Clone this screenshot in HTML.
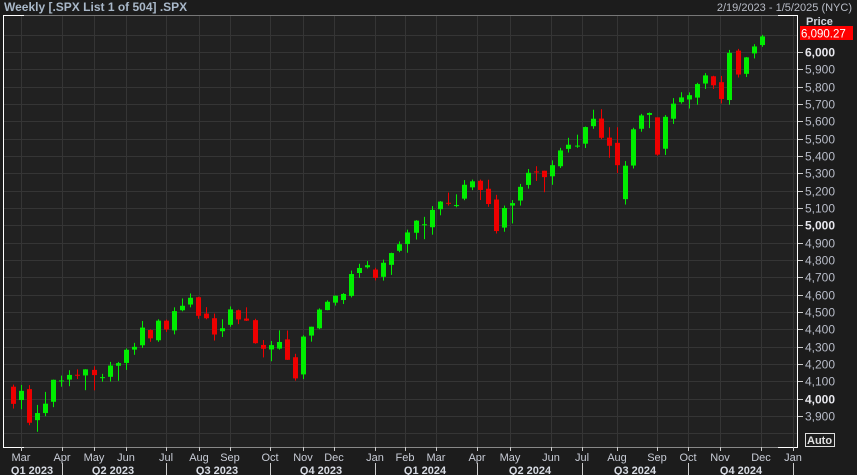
<!DOCTYPE html><html><head><style>
body{margin:0;background:#1c1c1c;width:857px;height:475px;overflow:hidden;font-family:"Liberation Sans",sans-serif}
svg{display:block}
</style></head><body>
<svg id="s" width="857" height="475" xmlns="http://www.w3.org/2000/svg">
<rect width="857" height="475" fill="#1c1c1c"/>
<rect x="3" y="15" width="795" height="432" fill="#212121"/>
<g id="grid" stroke="#353535" stroke-width="1"></g>
<g id="c"></g>
<line x1="3.5" y1="15" x2="3.5" y2="447" stroke="#fff"/>
<line x1="3" y1="15.5" x2="24" y2="15.5" stroke="#fff"/>
<line x1="24" y1="15.5" x2="778" y2="15.5" stroke="#777"/>
<line x1="778" y1="15.5" x2="798" y2="15.5" stroke="#fff"/>
<line x1="797.5" y1="15" x2="797.5" y2="447" stroke="#fff"/>
<line x1="3" y1="447.5" x2="24" y2="447.5" stroke="#fff"/>
<line x1="24" y1="447.5" x2="778" y2="447.5" stroke="#888"/>
<line x1="778" y1="447.5" x2="798" y2="447.5" stroke="#fff"/>
<g id="ax" font-size="11" fill="#c8ccd6"></g>
<text x="4" y="11" font-size="12" font-weight="bold" fill="#a9b8c9">Weekly [.SPX List 1 of 504] .SPX</text>
<text x="852" y="11" font-size="11" fill="#b8bcc6" text-anchor="end">2/19/2023 - 1/5/2025 (NYC)</text>
<text x="806" y="25" font-size="11" font-weight="bold" fill="#d0d4dc">Price</text>
<rect x="800" y="26" width="53" height="14" fill="#f00"/>
<text x="801" y="37.5" font-size="11.5" fill="#fff">6,090.27</text>
<rect x="805.5" y="433.5" width="29" height="13" fill="none" stroke="#ddd"/>
<text x="807" y="444" font-size="11" font-weight="bold" fill="#e0e0e0">Auto</text>
</svg>
<script>
var d=[[4069,4081,3943,3970],[3992,4079,3939,4045],[4055,4078,3847,3861],[3876,3964,3809,3917],[3917,4039,3899,3971],[3982,4110,3951,4109],[4102,4133,4069,4105],[4110,4164,4072,4137],[4138,4169,4113,4133],[4134,4170,4049,4169],[4166,4187,4048,4136],[4124,4143,4098,4124],[4126,4212,4099,4191],[4190,4212,4103,4205],[4206,4290,4166,4282],[4283,4322,4253,4299],[4308,4448,4293,4410],[4396,4400,4328,4348],[4337,4458,4328,4450],[4450,4456,4385,4399],[4394,4527,4371,4505],[4510,4578,4504,4536],[4543,4607,4527,4582],[4585,4588,4461,4478],[4491,4528,4458,4464],[4464,4491,4335,4370],[4389,4458,4356,4406],[4426,4532,4415,4515],[4510,4514,4430,4457],[4462,4527,4448,4450],[4453,4461,4317,4320],[4310,4338,4238,4288],[4284,4333,4216,4309],[4289,4394,4283,4327],[4342,4393,4223,4224],[4239,4259,4104,4117],[4140,4366,4113,4358],[4364,4415,4329,4415],[4406,4521,4401,4514],[4511,4567,4510,4559],[4554,4595,4537,4594],[4569,4609,4546,4604],[4593,4739,4584,4719],[4725,4778,4697,4754],[4758,4794,4751,4770],[4745,4755,4682,4697],[4703,4802,4681,4784],[4772,4842,4714,4840],[4853,4907,4845,4891],[4892,4975,4842,4959],[4957,5030,4918,5027],[5004,5049,4920,5006],[4989,5111,4946,5089],[5093,5140,5058,5137],[5130,5189,5114,5124],[5111,5179,5104,5117],[5154,5261,5145,5234],[5219,5264,5203,5254],[5257,5264,5146,5204],[5211,5263,5107,5123],[5149,5176,4953,4967],[4987,5114,4963,5100],[5114,5146,5011,5128],[5143,5239,5114,5222],[5233,5325,5212,5303],[5311,5341,5256,5305],[5315,5315,5191,5278],[5283,5375,5234,5347],[5341,5447,5331,5432],[5441,5505,5420,5465],[5460,5523,5447,5460],[5471,5570,5446,5567],[5572,5667,5557,5615],[5616,5670,5497,5505],[5506,5566,5390,5459],[5476,5566,5302,5347],[5151,5371,5120,5344],[5345,5563,5328,5554],[5557,5643,5540,5634],[5637,5651,5561,5648],[5623,5623,5402,5408],[5442,5636,5406,5626],[5615,5734,5585,5702],[5711,5768,5702,5738],[5726,5767,5674,5751],[5737,5822,5696,5815],[5818,5878,5787,5865],[5860,5863,5787,5808],[5826,5862,5703,5729],[5723,6012,5696,5995],[6008,6018,5853,5870],[5874,5971,5856,5969],[5992,6045,5963,6032],[6040,6099,6030,6090]];
var NS="http://www.w3.org/2000/svg";
function Y(p){return 52+(6000-p)*0.17333;}
function el(t,a,par,txt){var e=document.createElementNS(NS,t);for(var k in a)e.setAttribute(k,a[k]);if(txt)e.textContent=txt;document.getElementById(par).appendChild(e);return e;}
var months=[["Mar",21],["Apr",62],["May",94],["Jun",126],["Jul",166],["Aug",199],["Sep",230],["Oct",270],["Nov",303],["Dec",334],["Jan",375],["Feb",405],["Mar",436],["Apr",477],["May",510],["Jun",551],["Jul",582],["Aug",617],["Sep",657],["Oct",688],["Nov",720],["Dec",761],["Jan",793]];
for(var p=3800;p<=6100;p+=100){var y=Math.round(Y(p))+0.5;if(y>16&&y<447)el("line",{x1:3,x2:798,y1:y,y2:y},"grid");
 if(p>=3900&&p<=6000){el("line",{x1:798,x2:803,y1:y,y2:y,stroke:"#ccc"},"ax");var b=(p%1000==0);el("text",{x:835,y:y+4,"text-anchor":"end","font-size":"12","font-weight":b?"bold":"normal",fill:b?"#e8e8ee":"#b8bcc8"},"ax",(p/1000|0)+","+String(p%1000).padStart(3,"0"));}}
months.forEach(function(m){var x=m[1]+0.5;if(x<797)el("line",{x1:x,x2:x,y1:16,y2:447},"grid");el("line",{x1:x,x2:x,y1:447,y2:451,stroke:"#ccc"},"ax");el("text",{x:m[1],y:461,"text-anchor":"middle","font-size":"11"},"ax",m[0]);});
[62,166,270,375,477,582,688,793].forEach(function(x){el("line",{x1:x+.5,x2:x+.5,y1:463,y2:475,stroke:"#ccc"},"ax");});
[["Q1 2023",32],["Q2 2023",113],["Q3 2023",217],["Q4 2023",321],["Q1 2024",425],["Q2 2024",530],["Q3 2024",635],["Q4 2024",741]].forEach(function(q){el("text",{x:q[1],y:474,"text-anchor":"middle","font-weight":"bold","fill":"#d8dce4"},"ax",q[0]);});
d.forEach(function(c,i){var x=Math.round(13+i*8.05);var up=c[3]>=c[0];var col=up?"#00ee00":"#ee0000";
 el("rect",{x:x,y:Y(c[1]),width:1,height:Math.max(1,Y(c[2])-Y(c[1])),fill:col},"c");
 var t=Y(Math.max(c[0],c[3])),bt=Y(Math.min(c[0],c[3]));el("rect",{x:x-2,y:t,width:5,height:Math.max(1,bt-t),fill:col},"c");});
</script>
</body></html>
